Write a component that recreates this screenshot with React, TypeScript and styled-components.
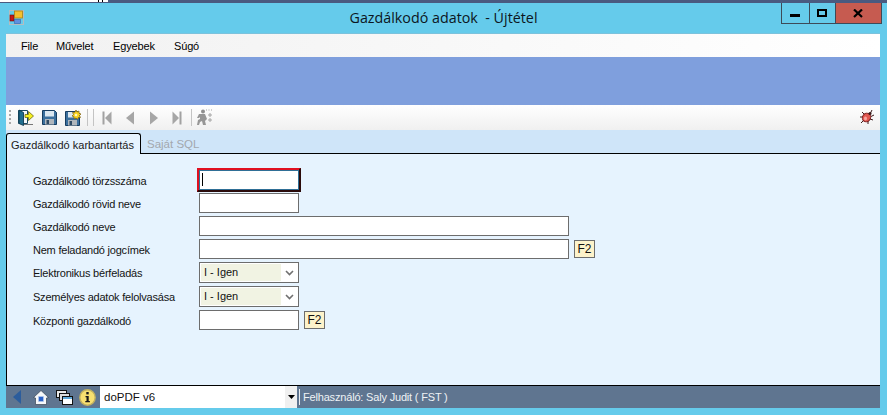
import React from 'react';
import styled, { createGlobalStyle } from 'styled-components';

const GlobalStyle = createGlobalStyle`
  html, body {
    margin: 0;
    padding: 0;
    height: 100%;
    overflow: hidden;
    font-family: "Liberation Sans", Arial, sans-serif;
    font-size: 11px;
    color: #000;
  }
  #root { height: 100%; }
`;

const Page = styled.div`
  display: flex;
  flex-direction: column;
  height: 100vh;
  background: #65cbeb;
`;

const DesktopStrip = styled.div`
  display: flex;
  height: 3px;
  flex: none;
  border-bottom: 1px solid #4a5a80;
  box-sizing: border-box;
  background: #fff;
`;

const DesktopGap = styled.div<{ $w: number; $bg: string }>`
  width: ${(p) => p.$w}px;
  flex: ${(p) => (p.$w === 0 ? 1 : 'none')};
  background: ${(p) => p.$bg};
`;

const Window = styled.div`
  flex: 1;
  min-height: 0;
  display: flex;
  flex-direction: column;
  padding: 0 7px 7px 6px;
`;

const TitleBar = styled.div`
  flex: none;
  height: 30px;
  display: grid;
  grid-template-columns: 1fr auto 1fr;
  margin: 0 -7px 0 -6px;
`;

const TitleIcon = styled.div`
  padding: 7px 0 0 9px;
`;

const Title = styled.div`
  font-family: "Open Sans", sans-serif;
  font-size: 14.3px;
  line-height: 30px;
  white-space: pre;
  color: #0c1622;
`;

const Controls = styled.div`
  display: flex;
  justify-content: flex-end;
  align-items: flex-start;
  padding-right: 5px;
`;

const CtrlButton = styled.div<{ $w: number; $close?: boolean }>`
  width: ${(p) => p.$w}px;
  height: 21px;
  box-sizing: border-box;
  margin-left: -1px;
  border: 1px solid #3d4a58;
  border-top: none;
  background: ${(p) => (p.$close ? '#c65b50' : 'transparent')};
  display: flex;
  align-items: center;
  justify-content: center;
`;

const MenuBar = styled.div`
  flex: none;
  height: 24px;
  display: flex;
  align-items: center;
  padding-left: 15px;
  background: linear-gradient(to right, #f1f1f1, #ffffff);
  border-top: 1px solid #7cc2dc;
  box-sizing: border-box;
`;

const MenuItem = styled.div<{ $w: number }>`
  width: ${(p) => p.$w}px;
  letter-spacing: -0.15px;
`;

const Banner = styled.div`
  flex: none;
  height: 48px;
  background: #7f9fdd;
`;

const Toolbar = styled.div`
  flex: none;
  height: 25px;
  display: flex;
  align-items: center;
  padding-left: 3px;
  background: linear-gradient(to bottom, #ffffff, #f0f0f0);
`;

const Grip = styled.div`
  width: 2px;
  height: 15px;
  margin-right: 3px;
  background: repeating-linear-gradient(to bottom, #a8a8a8 0 2px, transparent 2px 4px);
`;

const ToolButton = styled.div`
  width: 23.5px;
  height: 20px;
  flex: none;
  display: flex;
  align-items: center;
  justify-content: center;
`;

const ToolSep = styled.div<{ $before: number; $after: number }>`
  width: 1px;
  height: 17px;
  margin: 0 ${(p) => p.$after}px 0 ${(p) => p.$before}px;
  background: #c4c4c4;
`;

const ToolSpacer = styled.div`
  flex: 1;
`;

const BugButton = styled(ToolButton)`
  margin-right: 1px;
  padding-bottom: 1px;
`;

const TabStrip = styled.div`
  flex: none;
  height: 23px;
  display: flex;
  align-items: flex-end;
  background: #cfe5f9;
`;

const ActiveTab = styled.div`
  width: 135px;
  height: 21px;
  margin-bottom: -1px;
  box-sizing: border-box;
  position: relative;
  z-index: 1;
  background: #e6f3fe;
  border: 1px solid #000;
  border-bottom: none;
  border-radius: 3px 3px 0 0;
  padding: 4px 0 0 4px;
  font-size: 11px;
  line-height: 14px;
  color: #1a1a1a;
  white-space: nowrap;
`;

const IdleTab = styled.div`
  padding: 0 0 3px 6px;
  font-size: 11.5px;
  color: #a3a8ae;
`;

const TabPanel = styled.div`
  flex: 1;
  min-height: 0;
  box-sizing: border-box;
  background: #e6f3fe;
  border-top: 1px solid #000;
  border-bottom: 1px solid #000;
  border-left: 1px solid #000;
  padding: 16px 0 0 26px;
  display: flex;
  flex-direction: column;
  gap: 3px;
`;

const FormRow = styled.div<{ $h?: number }>`
  display: flex;
  align-items: center;
  height: ${(p) => p.$h ?? 20}px;
`;

const Label = styled.div`
  width: 166px;
  flex: none;
  color: #141414;
  font-size: 11px;
  letter-spacing: -0.22px;
  padding-top: 1px;
`;

const Field = styled.input<{ $w: number }>`
  width: ${(p) => p.$w}px;
  height: 20px;
  box-sizing: border-box;
  border: 1px solid #6d6d6d;
  background: #fff;
  padding: 0 2px;
  outline: none;
  border-radius: 0;
  font: inherit;
`;

const FocusRing = styled.div`
  position: relative;
  width: 100px;
  height: 20px;
  flex: none;
  &::before {
    content: '';
    position: absolute;
    inset: -2px -2px -2px -2px;
    border: 1px solid #e01020;
    border-right: 2px solid #2a0a0a;
    border-bottom: 2px solid #2a0a0a;
    box-shadow: inset 0 0 0 1px #e01020;
  }
  & input {
    position: relative;
    border-color: #2f6f96;
  }
`;

const Caret = styled.div`
  position: absolute;
  left: 3px;
  top: 3px;
  width: 1px;
  height: 13px;
  background: #000;
`;

const Dropdown = styled.div`
  width: 100px;
  height: 21px;
  box-sizing: border-box;
  border: 1px solid #6d6d6d;
  background: #fff;
  display: flex;
  align-items: center;
  padding: 1px;
`;

const DropdownValue = styled.div`
  width: 80px;
  height: 100%;
  background: #f1f3e3;
  padding-left: 3px;
  box-sizing: border-box;
  line-height: 17px;
  color: #111;
`;

const DropdownArrow = styled.div`
  flex: 1;
  display: flex;
  justify-content: center;
`;

const KeyButton = styled.div`
  width: 21px;
  height: 18px;
  margin-left: 5px;
  box-sizing: border-box;
  border: 1px solid #6d6d6d;
  background: #fdf3cb;
  text-align: center;
  line-height: 16px;
  font-size: 12px;
  color: #111;
`;

const StatusBar = styled.div`
  flex: none;
  height: 22px;
  display: flex;
  align-items: center;
  background: #5f7590;
`;

const StatusIcon = styled.div<{ $w: number }>`
  width: ${(p) => p.$w}px;
  flex: none;
  display: flex;
  justify-content: center;
  align-items: center;
`;

const PrinterCombo = styled.div`
  width: 197px;
  height: 22px;
  display: flex;
  background: #fff;
  font-size: 11.5px;
`;

const PrinterName = styled.div`
  flex: 1;
  padding-left: 4px;
  line-height: 22px;
  color: #111;
`;

const ComboArrow = styled.div`
  width: 12px;
  background: #f0f0f0;
  display: flex;
  align-items: center;
  justify-content: center;
`;

const StatusSep = styled.div`
  width: 1px;
  height: 16px;
  margin: 0 3px 0 2px;
  background: #e6ebf0;
`;

const StatusText = styled.div`
  color: #eef2f5;
  font-size: 11px;
  letter-spacing: -0.18px;
`;

const AppIcon = () => (
  <svg width="15" height="15" viewBox="0 0 15 15">
    <rect x="0.5" y="0.5" width="14" height="14" fill="none" stroke="#b5bcc0" />
    <rect x="1" y="5" width="4" height="6" fill="#c81818" stroke="#601010" strokeWidth="0.6" />
    <rect x="5.5" y="1" width="8" height="7" fill="#f5c030" stroke="#b08010" strokeWidth="0.8" />
    <rect x="5.5" y="9.5" width="6" height="4" fill="#5f90e0" stroke="#3a62a8" strokeWidth="0.6" />
  </svg>
);

const Door = () => (
  <svg width="17" height="17" viewBox="0 0 17 17">
    <path d="M1.500 1.500h9v13h-9z" fill="#f4f7f9" stroke="#1c4a62" />
    <path d="M2 1l4.500 2.500V16.500L2 14.500z" fill="#1f6d8e" stroke="#0f3a50" strokeWidth="0.9" />
    <path d="M8 5.500h3.500V2.500L16.500 7l-5 4.500v-3H8z" fill="#f6f020" stroke="#6f6a10" strokeWidth="0.8" />
    <path d="M7 15.500h9" stroke="#777" />
  </svg>
);

const FloppyBody = () => (
  <>
    <path d="M.5.500h12l2 2v12H.5z" fill="#3b6f9d" stroke="#173d60" />
    <rect x="3" y="1" width="9" height="5.500" fill="#dbe7f0" />
    <rect x="3" y="9" width="9" height="5.500" fill="#b0b6bc" />
    <rect x="4.500" y="10" width="2.500" height="4" fill="#2f4a64" />
  </>
);

const Floppy = () => (
  <svg width="15" height="15" viewBox="0 0 15 15">
    <FloppyBody />
  </svg>
);

const FloppyStar = () => (
  <svg width="16" height="16" viewBox="0 0 16 16">
    <g transform="translate(0 1)">
      <FloppyBody />
    </g>
    <path
      d="M11 0l1 2 2-1 0 2.200 2 .8-1.500 1.500 1 2-2.200 0-.8 2-1.500-1.500-2 1 0-2.200-2-.8 1.500-1.500-1-2 2.200 0z"
      fill="#f7d21e"
      stroke="#7a5c10"
      strokeWidth="0.7"
    />
    <circle cx="11" cy="5" r="1.300" fill="#fff6c0" />
  </svg>
);

const NavArrow = ({ dir, bar }: { dir: 'l' | 'r'; bar?: boolean }) => (
  <svg width="10" height="14" viewBox="0 0 10 14">
    <g transform={dir === 'r' ? 'translate(10 0) scale(-1 1)' : undefined}>
      {bar && <rect x="0.500" y="0.500" width="2" height="13" fill="#a2a2a2" />}
      <path d={bar ? 'M9.500 0.500v13L3 7z' : 'M9 0.500v13L1 7z'} fill="#a6a6a6" />
    </g>
  </svg>
);

const Runner = () => (
  <svg width="17" height="17" viewBox="0 0 17 17">
    <circle cx="7" cy="2.500" r="2" fill="#8f8f8f" />
    <path d="M3 5h6l2 5-2 2 1 4H7l-1-4-2 1-1 3H1l1-5 2-1V8L3 9H1z" fill="#969696" />
    <path d="M10 1h1M12.500 1h1M15 1h1M12 6h4M14 4v4M12 11h4M14 9v4" stroke="#a4a4a4" strokeWidth="1" />
  </svg>
);

const Ladybug = () => (
  <svg width="16" height="16" viewBox="0 0 16 16">
    <path
      d="M3 3l3 3M1 8l3 0M2 14l3-3M13 1l-2 4M15 6l-3 1.500M14 11l-3-1M9 15l0-3"
      stroke="#3a1a1a"
      strokeWidth="1"
    />
    <ellipse cx="7.500" cy="8.500" rx="4" ry="4.500" transform="rotate(35 7.500 8.500)" fill="#e0564f" stroke="#7c1c1c" />
    <ellipse cx="6.500" cy="9.500" rx="1.500" ry="2" fill="#f6a4a0" />
    <circle cx="11" cy="4.500" r="1.500" fill="#3a1a1a" />
  </svg>
);

const Chevron = () => (
  <svg width="9" height="6" viewBox="0 0 9 6">
    <path d="M1 1l3.500 3.500L8 1" fill="none" stroke="#707070" strokeWidth="1.600" />
  </svg>
);

const BackArrow = () => (
  <svg width="9" height="14" viewBox="0 0 9 14">
    <path d="M8 0v14L0 7z" fill="#2c5d9c" />
  </svg>
);

const HomeIcon = () => (
  <svg width="16" height="15" viewBox="0 0 16 15">
    <path d="M8 .5L.5 7.500 2.500 8v6.500h11V8l2-.5z" fill="#f6f8fa" stroke="#3a4654" strokeWidth="0.7" />
    <rect x="5.500" y="6.500" width="5" height="5" fill="#2a62c8" stroke="#bcd0ee" strokeWidth="0.6" />
  </svg>
);

const WindowsIcon = () => (
  <svg width="17" height="15" viewBox="0 0 17 15">
    <rect x="0.500" y="0.500" width="10" height="7" fill="#e8e8e8" stroke="#111" />
    <rect x="3.500" y="3.500" width="10" height="7" fill="#dcdcdc" stroke="#111" />
    <rect x="6.500" y="6.500" width="10" height="8" fill="#fff" stroke="#111" />
    <rect x="7" y="7" width="9" height="2" fill="#5fa8d8" />
  </svg>
);

const InfoIcon = () => (
  <svg width="17" height="17" viewBox="0 0 17 17">
    <circle cx="8.500" cy="8.500" r="7.700" fill="#f8e070" stroke="#c0b060" strokeWidth="1.400" />
    <rect x="7.300" y="3" width="2.400" height="2.400" fill="#1a1a1a" />
    <path d="M6.500 7h3.200v5h1.200v1.300H6.300V12h1.200V8.300h-1z" fill="#1a1a1a" />
  </svg>
);

const ComboCaret = () => (
  <svg width="7" height="4" viewBox="0 0 7 4">
    <path d="M0 0h7L3.500 4z" fill="#000" />
  </svg>
);

const ControlGlyph = ({ kind }: { kind: 'min' | 'max' | 'close' }) => (
  <svg width="11" height="9" viewBox="0 0 11 9">
    {kind === 'min' && <rect x="0" y="5" width="10" height="3" fill="#000" />}
    {kind === 'max' && <rect x="1" y="1" width="8" height="6" fill="none" stroke="#000" strokeWidth="2" />}
    {kind === 'close' && <path d="M1 0.500l8 7.500M9 0.500l-8 7.500" stroke="#000" strokeWidth="2.200" />}
  </svg>
);

const App = () => {
  return (
    <Page>
      <GlobalStyle />
      <DesktopStrip>
        <DesktopGap $w={98} $bg="#fff" />
        <DesktopGap $w={1} $bg="#000" />
        <DesktopGap $w={3} $bg="#fff" />
        <DesktopGap $w={1} $bg="#000" />
        <DesktopGap $w={5} $bg="#fff" />
        <DesktopGap $w={0} $bg="#4a5a80" />
      </DesktopStrip>
      <Window>
        <TitleBar>
          <TitleIcon>
            <AppIcon />
          </TitleIcon>
          <Title>Gazdálkodó adatok  - Újtétel</Title>
          <Controls>
            <CtrlButton $w={29}>
              <ControlGlyph kind="min" />
            </CtrlButton>
            <CtrlButton $w={27}>
              <ControlGlyph kind="max" />
            </CtrlButton>
            <CtrlButton $w={47} $close>
              <ControlGlyph kind="close" />
            </CtrlButton>
          </Controls>
        </TitleBar>

        <MenuBar>
          <MenuItem $w={35}>File</MenuItem>
          <MenuItem $w={57}>Művelet</MenuItem>
          <MenuItem $w={61}>Egyebek</MenuItem>
          <MenuItem $w={40}>Súgó</MenuItem>
        </MenuBar>

        <Banner />

        <Toolbar>
          <Grip />
          <ToolButton>
            <Door />
          </ToolButton>
          <ToolButton>
            <Floppy />
          </ToolButton>
          <ToolButton>
            <FloppyStar />
          </ToolButton>
          <ToolSep $before={2.5} $after={5} />
          <ToolSep $before={0} $after={1} />
          <ToolButton>
            <NavArrow dir="l" bar />
          </ToolButton>
          <ToolButton>
            <NavArrow dir="l" />
          </ToolButton>
          <ToolButton>
            <NavArrow dir="r" />
          </ToolButton>
          <ToolButton>
            <NavArrow dir="r" bar />
          </ToolButton>
          <ToolSep $before={2} $after={1} />
          <ToolButton>
            <Runner />
          </ToolButton>
          <ToolSpacer />
          <BugButton>
            <Ladybug />
          </BugButton>
        </Toolbar>

        <TabStrip>
          <ActiveTab>Gazdálkodó karbantartás</ActiveTab>
          <IdleTab>Saját SQL</IdleTab>
        </TabStrip>

        <TabPanel>
          <FormRow>
            <Label>Gazdálkodó törzsszáma</Label>
            <FocusRing>
              <Field $w={100} readOnly />
              <Caret />
            </FocusRing>
          </FormRow>
          <FormRow>
            <Label>Gazdálkodó rövid neve</Label>
            <Field $w={100} readOnly />
          </FormRow>
          <FormRow>
            <Label>Gazdálkodó neve</Label>
            <Field $w={370} readOnly />
          </FormRow>
          <FormRow>
            <Label>Nem feladandó jogcímek</Label>
            <Field $w={370} readOnly />
            <KeyButton>F2</KeyButton>
          </FormRow>
          <FormRow $h={21}>
            <Label>Elektronikus bérfeladás</Label>
            <Dropdown>
              <DropdownValue>I - Igen</DropdownValue>
              <DropdownArrow>
                <Chevron />
              </DropdownArrow>
            </Dropdown>
          </FormRow>
          <FormRow $h={21}>
            <Label>Személyes adatok felolvasása</Label>
            <Dropdown>
              <DropdownValue>I - Igen</DropdownValue>
              <DropdownArrow>
                <Chevron />
              </DropdownArrow>
            </Dropdown>
          </FormRow>
          <FormRow>
            <Label>Központi gazdálkodó</Label>
            <Field $w={100} readOnly />
            <KeyButton>F2</KeyButton>
          </FormRow>
        </TabPanel>

        <StatusBar>
          <StatusIcon $w={22}>
            <BackArrow />
          </StatusIcon>
          <StatusIcon $w={26}>
            <HomeIcon />
          </StatusIcon>
          <StatusIcon $w={20}>
            <WindowsIcon />
          </StatusIcon>
          <StatusIcon $w={26}>
            <InfoIcon />
          </StatusIcon>
          <PrinterCombo>
            <PrinterName>doPDF v6</PrinterName>
            <ComboArrow>
              <ComboCaret />
            </ComboArrow>
          </PrinterCombo>
          <StatusSep />
          <StatusText>Felhasználó: Saly Judit ( FST )</StatusText>
        </StatusBar>
      </Window>
    </Page>
  );
};

export default App;
